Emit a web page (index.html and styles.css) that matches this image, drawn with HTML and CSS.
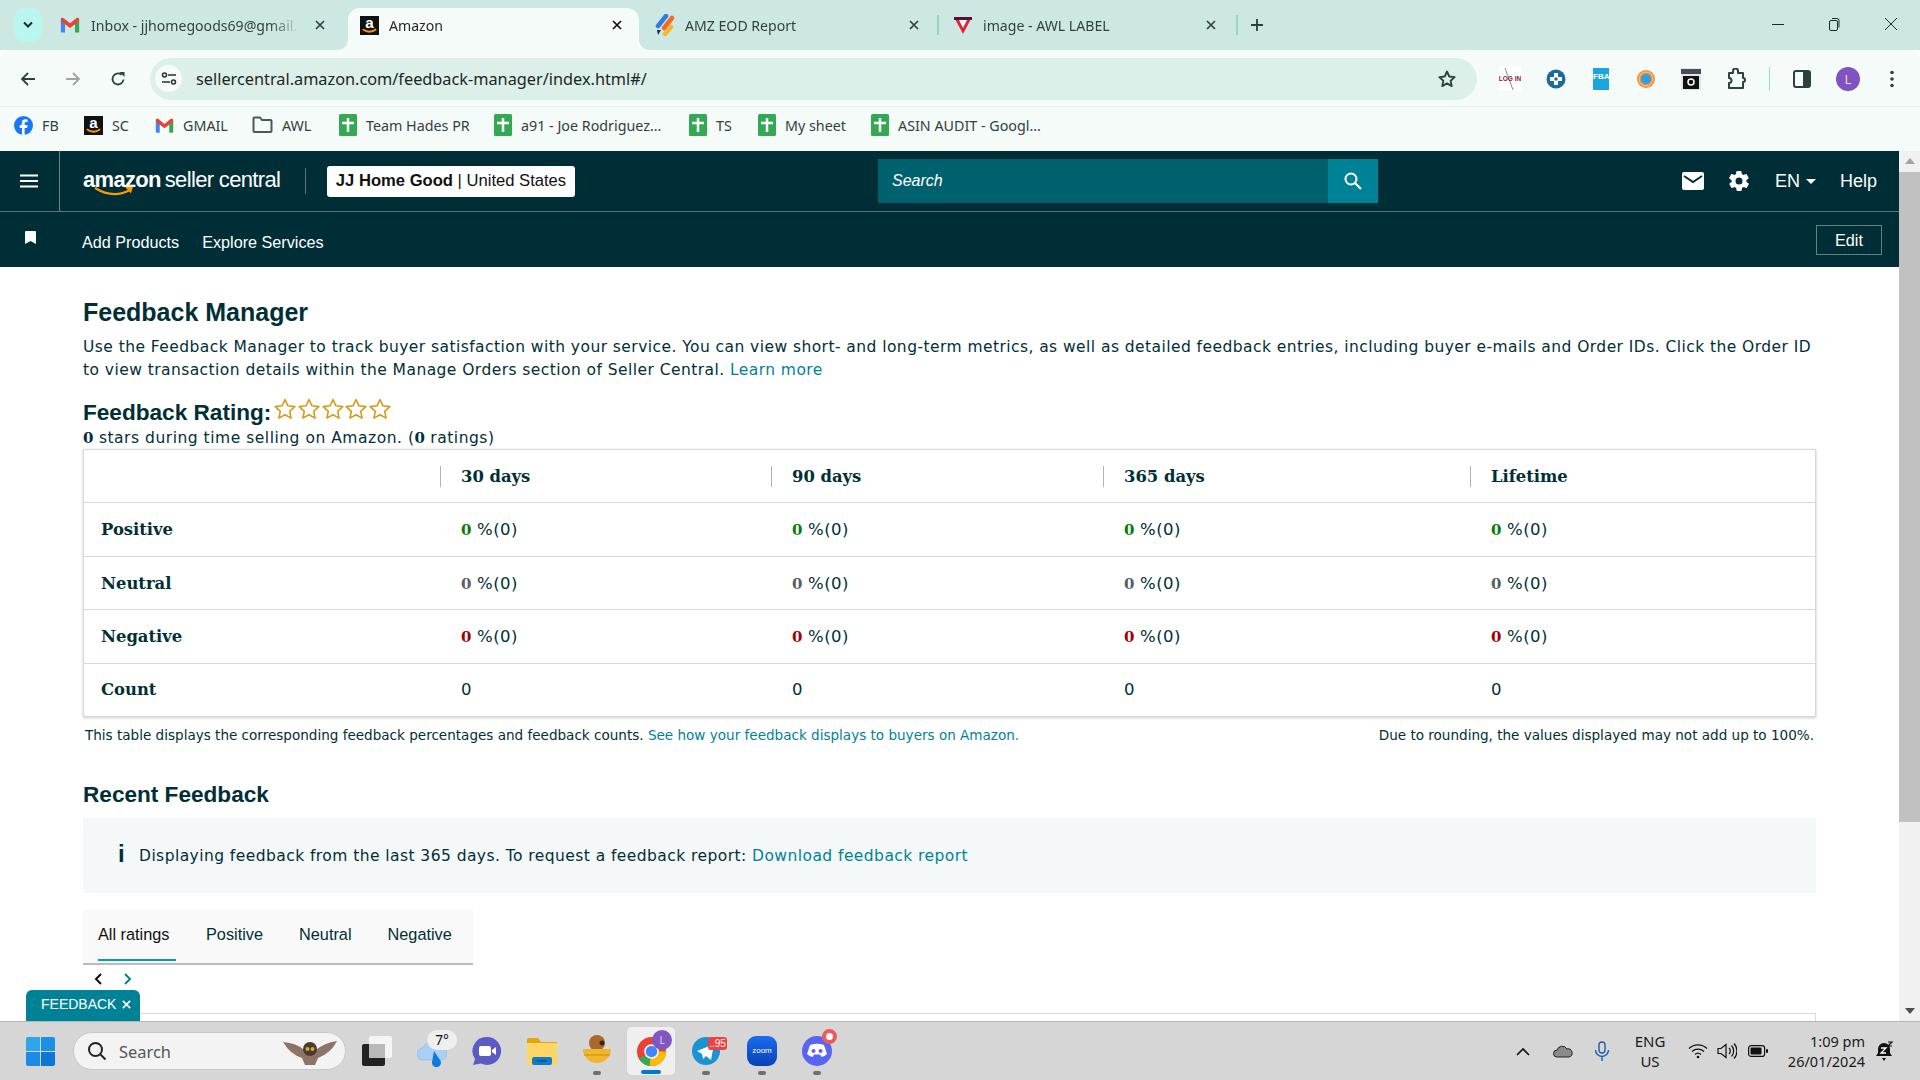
FILE: index.html
```html
<!DOCTYPE html>
<html lang="en">
<head>
<meta charset="utf-8">
<title>Amazon</title>
<link rel="stylesheet" href="styles.css">
</head>
<body>
<svg class="defs" width="0" height="0">
  <defs>
    <symbol id="gmail" viewBox="0 0 24 24"><path fill="#4285f4" d="M1 6v14a1 1 0 0 0 1 1h4V10z"/><path fill="#34a853" d="M23 6v14a1 1 0 0 1-1 1h-4V10z"/><path fill="#ea4335" d="M6 5 12 10l6-5 2-1.500a2 2 0 0 1 3 1.500v2l-5 4-6 4.500L6 11 1 7V5a2 2 0 0 1 3-1.500z"/></symbol>
    <symbol id="amz" viewBox="0 0 20 20"><rect width="20" height="20" fill="#111"/><text x="10" y="13" font-family="Liberation Sans" font-size="16" font-weight="700" fill="#fff" text-anchor="middle">a</text><path d="M3 14q7 5 14 0" fill="none" stroke="#f90" stroke-width="2"/></symbol>
    <symbol id="sheet" viewBox="0 0 18 22"><rect width="18" height="22" rx="1.500" fill="#34a853"/><path d="M9 4v14M3 9h12" stroke="#fff" stroke-width="2.500"/></symbol>
    <symbol id="x" viewBox="0 0 12 12"><path d="M2 2l8 8M10 2l-8 8" fill="none" stroke="currentColor" stroke-width="1.700"/></symbol>
    <symbol id="star" viewBox="0 0 24 24"><path d="M12 2.500l2.900 6.300 6.900.8-5.100 4.700 1.400 6.800-6.100-3.400-6.100 3.400 1.400-6.800-5.100-4.700 6.900-.8z" fill="none" stroke="#d59a1e" stroke-width="1.600" stroke-linejoin="round"/></symbol>
  </defs>
</svg>

<div class="page">
  <header class="tabstrip">
    <div class="tab-menu"><svg width="12" height="8" viewBox="0 0 12 8"><path d="M2 1.500l4 4 4-4" fill="none" stroke="#1b2b2a" stroke-width="2"/></svg></div>
    <div class="tab tab-gmail"><svg class="fav" width="20" height="20"><use href="#gmail"/></svg><span class="tab-title">Inbox - jjhomegoods69@gmail.</span><svg class="tab-x" width="12" height="12"><use href="#x"/></svg></div>
    <div class="tab tab-active"><svg class="fav" width="19" height="19"><use href="#amz"/></svg><span class="tab-title">Amazon</span><svg class="tab-x" width="12" height="12"><use href="#x"/></svg></div>
    <div class="tab tab-eod"><svg class="fav" width="20" height="22" viewBox="0 0 20 22"><path d="M3 12 11 2" stroke="#2f7de1" stroke-width="4.500" stroke-linecap="round"/><path d="M9 14 17 4" stroke="#f26b21" stroke-width="4.500" stroke-linecap="round"/><path d="M10 20l6-7" stroke="#f5b82e" stroke-width="4.500" stroke-linecap="round"/><path d="M2 16h4l-3 5z" fill="#1d2a55"/></svg><span class="tab-title">AMZ EOD Report</span><svg class="tab-x" width="12" height="12"><use href="#x"/></svg></div>
    <i class="tab-sep"></i>
    <div class="tab tab-awl"><svg class="fav" width="20" height="20" viewBox="0 0 20 20"><path d="M1 2h18l-9 17z" fill="#e0232e"/><path d="M6 5h8l-4 8z" fill="#fff"/><path d="M1 2h18v3H1z" fill="#5a1036"/></svg><span class="tab-title">image - AWL LABEL</span><svg class="tab-x" width="12" height="12"><use href="#x"/></svg></div>
    <i class="tab-sep"></i>
    <svg class="tab-plus" width="14" height="14" viewBox="0 0 14 14"><path d="M7 1v12M1 7h12" stroke="#29413d" stroke-width="1.800"/></svg>
    <div class="win-controls">
      <svg width="12" height="12" viewBox="0 0 12 12"><path d="M0 6.500h12" stroke="#1b2b2a"/></svg>
      <svg width="14" height="14" viewBox="0 0 14 14"><rect x="2.500" y="3.500" width="8" height="10" rx="1.500" fill="none" stroke="#1b2b2a"/><path d="M5 1.500h5a2 2 0 0 1 2 2v7" fill="none" stroke="#1b2b2a"/></svg>
      <svg width="14" height="14" viewBox="0 0 14 14"><path d="M1 1l12 12M13 1L1 13" stroke="#1b2b2a"/></svg>
    </div>
  </header>

  <div class="toolbar">
    <svg class="nav-ico" width="16" height="16" viewBox="0 0 16 16"><path d="M15 8H2M8 2 2 8l6 6" fill="none" stroke="#2e403e" stroke-width="1.800"/></svg>
    <svg class="nav-ico dim" width="16" height="16" viewBox="0 0 16 16"><path d="M1 8h13M8 2l6 6-6 6" fill="none" stroke="#9aa5a3" stroke-width="1.800"/></svg>
    <svg class="nav-ico" width="16" height="16" viewBox="0 0 16 16"><path d="M13.500 8.500A5.500 5.500 0 1 1 11.500 3.700" fill="none" stroke="#2e403e" stroke-width="1.800"/><path d="M9.500 1h5v5z" fill="#2e403e"/></svg>
    <div class="omnibox">
      <span class="site-info"><svg width="16" height="14" viewBox="0 0 16 14"><circle cx="3.500" cy="3" r="2" fill="none" stroke="#26302f" stroke-width="1.500"/><path d="M7 3h8M1 10h8" stroke="#26302f" stroke-width="1.500"/><circle cx="12.500" cy="10" r="2" fill="none" stroke="#26302f" stroke-width="1.500"/></svg></span>
      <span class="url">sellercentral.amazon.com/feedback-manager/index.html#/</span>
      <svg class="omni-star" width="20" height="20" viewBox="0 0 24 24"><path d="M12 3l2.700 6 6.500.7-4.800 4.400 1.300 6.400-5.700-3.200-5.700 3.200 1.300-6.400L2.800 9.700 9.300 9z" fill="none" stroke="#2e403e" stroke-width="2.200" stroke-linejoin="round"/></svg>
    </div>
    <div class="ext-row">
      <svg width="22" height="24" viewBox="0 0 22 24"><rect width="22" height="24" fill="#fff"/><path d="M6 1l8 22" stroke="#888"/><text x="11" y="14" font-size="6.500" font-weight="700" font-family="Liberation Sans" fill="#8a2030" text-anchor="middle">LOG IN</text></svg>
      <svg width="20" height="20" viewBox="0 0 20 20"><circle cx="10" cy="10" r="9.500" fill="#1b6aa0"/><path d="M10 4v12M4 10h12" stroke="#fff" stroke-width="4"/><circle cx="10" cy="10" r="1.700" fill="#1b6aa0"/></svg>
      <span class="ext-fba">FBA</span>
      <svg class="ext-orange" width="20" height="22" viewBox="0 0 20 22"><circle cx="10" cy="11" r="9" fill="#ef8f35"/><circle cx="10" cy="11" r="5" fill="#2aa0e8"/><circle cx="10" cy="11" r="7" fill="none" stroke="#f8c9a0"/></svg>
      <svg width="20" height="22" viewBox="0 0 20 22"><rect width="20" height="22" fill="#dfe6e5"/><rect y="1" width="20" height="5" fill="#4a4a55"/><rect x="2" y="8" width="16" height="13" fill="#111"/><circle cx="10" cy="14" r="3" fill="none" stroke="#fff" stroke-width="1.500"/></svg>
      <svg width="20" height="22" viewBox="0 0 20 22"><path d="M3 5h4V3a2 2 0 0 1 5 0v2h5v5a2 2 0 0 1 0 4v6H3v-5a2.500 2.500 0 0 0 0-5z" fill="none" stroke="#2e403e" stroke-width="2" stroke-linejoin="round"/></svg>
      <i class="ext-sep"></i>
      <svg width="18" height="18" viewBox="0 0 18 18"><rect x="1" y="1" width="16" height="16" rx="2" fill="none" stroke="#2e403e" stroke-width="2"/><rect x="10" y="1" width="7" height="16" fill="#2e403e"/></svg>
      <span class="avatar">L</span>
      <svg width="4" height="18" viewBox="0 0 4 18"><circle cx="2" cy="2.500" r="1.800" fill="#2e403e"/><circle cx="2" cy="9" r="1.800" fill="#2e403e"/><circle cx="2" cy="15.500" r="1.800" fill="#2e403e"/></svg>
    </div>
  </div>

  <nav class="bookmarks">
    <a class="bm bm-fb"><svg width="19" height="19" viewBox="0 0 20 20"><circle cx="10" cy="10" r="10" fill="#1877f2"/><path d="M11.200 20v-7.500h2.600l.4-3h-3V7.800c0-.9.300-1.500 1.600-1.500h1.500V3.600a18 18 0 0 0-2.300-.1c-2.300 0-3.800 1.400-3.800 3.900v2.100H6v3h2.400V20z" fill="#fff"/></svg>FB</a>
    <a class="bm bm-sc"><svg width="19" height="19"><use href="#amz"/></svg>SC</a>
    <a class="bm bm-gm"><svg width="19" height="19"><use href="#gmail"/></svg>GMAIL</a>
    <a class="bm bm-awl"><svg width="21" height="18" viewBox="0 0 21 18"><path d="M1.500 2.500a1 1 0 0 1 1-1h5.500l2 2.500h8.500a1 1 0 0 1 1 1v10a1 1 0 0 1-1 1h-16a1 1 0 0 1-1-1z" fill="none" stroke="#4d5957" stroke-width="2"/></svg>AWL</a>
    <a class="bm bm-th"><svg width="18" height="22"><use href="#sheet"/></svg>Team Hades PR</a>
    <a class="bm bm-a91"><svg width="18" height="22"><use href="#sheet"/></svg>a91 - Joe Rodriguez...</a>
    <a class="bm bm-ts"><svg width="18" height="22"><use href="#sheet"/></svg>TS</a>
    <a class="bm bm-my"><svg width="18" height="22"><use href="#sheet"/></svg>My sheet</a>
    <a class="bm"><svg width="18" height="22"><use href="#sheet"/></svg>ASIN AUDIT - Googl...</a>
  </nav>

  <div class="viewport">
    <div class="site">
      <div class="sc-head">
        <div class="burger-cell"><svg width="18" height="14" viewBox="0 0 18 14"><path d="M0 1.500h18M0 7h18M0 12.500h18" stroke="#fff" stroke-width="2"/></svg></div>
        <div class="logo"><b class="logo-amz">amazon</b><span class="logo-sc">seller central</span><svg class="swoosh" width="42" height="11" viewBox="0 0 42 11"><path d="M1 2q18 11 35 2" fill="none" stroke="#f90" stroke-width="2.200"/><path d="M31 1l8-.5-2 7z" fill="#f90"/></svg></div>
        <i class="head-div"></i>
        <div class="account"><b>JJ Home Good</b> | United States</div>
        <div class="search"><span class="search-input">Search</span><span class="search-btn"><svg width="20" height="20" viewBox="0 0 20 20"><circle cx="8" cy="8" r="5.500" fill="none" stroke="#fff" stroke-width="2"/><path d="M12 12l6 6" stroke="#fff" stroke-width="2.200"/></svg></span></div>
        <div class="head-right">
          <svg class="i-mail" width="22" height="18" viewBox="0 0 22 18"><rect width="22" height="18" rx="2" fill="#fff"/><path d="M2 4l9 6 9-6" fill="none" stroke="#002e36" stroke-width="2"/></svg>
          <svg class="i-gear" width="24" height="24" viewBox="0 0 24 24"><path fill="#fff" fill-rule="evenodd" d="M19.400 13c.1-.3.100-.7.100-1s0-.7-.1-1l2.100-1.600a.5.500 0 0 0 .1-.6l-2-3.500a.5.500 0 0 0-.6-.2l-2.500 1a7 7 0 0 0-1.700-1l-.4-2.600a.5.500 0 0 0-.5-.4h-4a.5.500 0 0 0-.5.400l-.4 2.600a7 7 0 0 0-1.700 1l-2.500-1a.5.500 0 0 0-.6.2l-2 3.500a.5.500 0 0 0 .1.600L4.600 11a8 8 0 0 0 0 2l-2.100 1.600a.5.500 0 0 0-.1.600l2 3.500c.1.200.4.300.6.200l2.500-1c.5.400 1.100.7 1.700 1l.4 2.600c0 .2.200.4.500.4h4c.3 0 .5-.2.500-.4l.4-2.600a7 7 0 0 0 1.700-1l2.500 1c.2.100.5 0 .6-.2l2-3.500a.5.500 0 0 0-.1-.6zM12 15.500a3.500 3.500 0 1 1 0-7 3.500 3.500 0 0 1 0 7z"/></svg>
          <span class="lang">EN<i class="caret"></i></span>
          <span class="help">Help</span>
        </div>
      </div>
      <div class="sc-sub">
        <svg class="i-book" width="11" height="13" viewBox="0 0 11 13"><path d="M0 1a1 1 0 0 1 1-1h9a1 1 0 0 1 1 1v12l-5.500-3L0 13z" fill="#fff"/></svg>
        <a class="sub-link">Add Products</a>
        <a class="sub-link">Explore Services</a>
        <span class="edit">Edit</span>
      </div>
      <main class="content">
        <h1 class="h-main">Feedback Manager</h1>
        <p class="intro">Use the Feedback Manager to track buyer satisfaction with your service. You can view short- and long-term metrics, as well as detailed feedback entries, including buyer e-mails and Order IDs. Click the Order ID to view transaction details within the Manage Orders section of Seller Central. <a class="lnk">Learn more</a></p>
        <div class="rating-head">
          <h2 class="h-rating">Feedback Rating:</h2>
          <span class="stars"><svg width="24" height="24"><use href="#star"/></svg><svg width="24" height="24"><use href="#star"/></svg><svg width="24" height="24"><use href="#star"/></svg><svg width="24" height="24"><use href="#star"/></svg><svg width="24" height="24"><use href="#star"/></svg></span>
        </div>
        <p class="rating-sub"><b>0</b> stars during time selling on Amazon. (<b>0</b> ratings)</p>

        <div class="fb-table">
          <div class="row row-head"><span></span><b class="th">30 days</b><b class="th">90 days</b><b class="th">365 days</b><b class="th">Lifetime</b></div>
          <div class="row"><b class="rh">Positive</b><span><b class="g">0</b> %(0)</span><span><b class="g">0</b> %(0)</span><span><b class="g">0</b> %(0)</span><span><b class="g">0</b> %(0)</span></div>
          <div class="row"><b class="rh">Neutral</b><span><b class="n">0</b> %(0)</span><span><b class="n">0</b> %(0)</span><span><b class="n">0</b> %(0)</span><span><b class="n">0</b> %(0)</span></div>
          <div class="row"><b class="rh">Negative</b><span><b class="r">0</b> %(0)</span><span><b class="r">0</b> %(0)</span><span><b class="r">0</b> %(0)</span><span><b class="r">0</b> %(0)</span></div>
          <div class="row"><b class="rh">Count</b><span>0</span><span>0</span><span>0</span><span>0</span></div>
        </div>
        <div class="note"><span>This table displays the corresponding feedback percentages and feedback counts. <a class="lnk">See how your feedback displays to buyers on Amazon.</a></span><span>Due to rounding, the values displayed may not add up to 100%.</span></div>

        <h2 class="h-recent">Recent Feedback</h2>
        <div class="info"><b class="info-i">i</b><span>Displaying feedback from the last 365 days. To request a feedback report: <a class="lnk">Download feedback report</a></span></div>

        <div class="tabs"><a class="t t-on">All ratings</a><a class="t t-pos">Positive</a><a class="t t-neu">Neutral</a><a class="t">Negative</a></div>
        <div class="pager">
          <svg width="10" height="14" viewBox="0 0 10 14"><path d="M8 2 3 7l5 5" fill="none" stroke="#0f1111" stroke-width="2"/></svg>
          <svg width="10" height="14" viewBox="0 0 10 14"><path d="M2 2l5 5-5 5" fill="none" stroke="#008296" stroke-width="2"/></svg>
        </div>
        <div class="next-card"></div>
      </main>
    </div>
    <div class="scrollbar"><i class="sb-up"></i><i class="sb-thumb"></i><i class="sb-down"></i></div>
    <div class="feedback-tab">FEEDBACK<svg width="11" height="11"><use href="#x"/></svg></div>
  </div>

  <footer class="taskbar">
    <svg class="tk-win" width="29" height="29" viewBox="0 0 29 29"><path fill="#2ea6ee" d="M0 2a2 2 0 0 1 2-2h12v14H0z"/><path fill="#1c90e6" d="M15 0h12a2 2 0 0 1 2 2v12H15z"/><path fill="#1a8ae4" d="M0 15h14v14H2a2 2 0 0 1-2-2z"/><path fill="#0b78d8" d="M15 15h14v12a2 2 0 0 1-2 2H15z"/></svg>
    <div class="tk-search">
      <svg width="20" height="20" viewBox="0 0 20 20"><circle cx="8.500" cy="8.500" r="6.500" fill="none" stroke="#222" stroke-width="2"/><path d="M13.500 13.500 18.500 18.500" stroke="#222" stroke-width="2"/></svg>
      <span class="tk-search-text">Search</span>
      <svg class="owl" width="54" height="28" viewBox="0 0 54 28"><path d="M0 5q14 1 21 8l6 4 6-4q8-7 21-9-6 12-19 17l-3 7h-10l-3-7Q7 17 0 5z" fill="#8d7466"/><circle cx="27" cy="12" r="7" fill="#4a3a30"/><circle cx="24.500" cy="12" r="2" fill="#d8a93a"/><circle cx="29.500" cy="12" r="2" fill="#d8a93a"/></svg>
    </div>
    <svg class="tk-view" width="30" height="30" viewBox="0 0 30 30"><rect y="8" width="23" height="22" rx="2" fill="#222"/><rect x="7" width="23" height="22" rx="2" fill="#f4f4f4"/><rect x="7" y="8" width="16" height="14" fill="#b9b9b9"/></svg>
    <div class="tk-weather"><svg width="30" height="26" viewBox="0 0 30 26"><path d="M6 19a6 6 0 0 1 0-12 9 9 0 0 1 16-2 7 7 0 0 1 2 14z" fill="#a9d1f7" stroke="#7fb5ea" stroke-width=".6"/><path d="M17 10l6 9a4.500 4.500 0 1 1-8 2z" fill="#0c7ce0"/></svg><span class="tk-temp">7°</span></div>
    <svg class="tk-meet" width="30" height="30" viewBox="0 0 30 30"><path d="M15 1a14 14 0 1 1-6 26.600L1 29l2-6A14 14 0 0 1 15 1z" fill="#5b5bc4"/><rect x="7" y="10" width="12" height="10" rx="2" fill="#fff"/><path d="M20 14l4-3v8l-4-3z" fill="#fff"/></svg>
    <svg class="tk-folder" width="30" height="27" viewBox="0 0 30 27"><path d="M0 2a2 2 0 0 1 2-2h9l3 4h16v5H0z" fill="#e2a50f"/><rect y="5" width="30" height="22" fill="#fcd765"/><rect x="5" y="19" width="20" height="8" rx="2" fill="#0f7bcc"/><path d="M10 23h10" stroke="#0a4f8a" stroke-width="1.500"/></svg>
    <div class="tk-app tk-bear"><svg width="28" height="32" viewBox="0 0 28 32"><circle cx="14" cy="8" r="8" fill="#a86a2c"/><circle cx="19" cy="8" r="2.500" fill="#3a2410"/><path d="M0 14h28a14 14 0 0 1-28 0z" fill="#f0b62c"/><path d="M1 20h26" stroke="#c98a15"/></svg><i class="pip"></i></div>
    <div class="tk-app tk-chrome"><svg width="31" height="31" viewBox="0 0 32 32"><circle cx="16" cy="16" r="15" fill="#ea4335"/><path d="M16 16 3 23.500A15 15 0 0 0 16 31z" fill="#34a853"/><path d="M16 16h15a15 15 0 0 1-15 15l-2-1z" fill="#fbbc04"/><circle cx="16" cy="16" r="7.500" fill="#fff"/><circle cx="16" cy="16" r="6" fill="#4285f4"/></svg><span class="ch-badge">L</span><i class="pip pip-on"></i></div>
    <div class="tk-app tk-tg"><svg width="28" height="28" viewBox="0 0 28 28"><circle cx="14" cy="14" r="14" fill="#1b92d1"/><path d="M5 14l17-7-3 16-5-4-3 3-1-5z" fill="#fff"/></svg><span class="tg-badge">..95</span><i class="pip"></i></div>
    <div class="tk-app tk-zoom"><span class="zoom-ico">zoom</span><i class="pip"></i></div>
    <div class="tk-app tk-discord"><svg width="30" height="30" viewBox="0 0 30 30"><circle cx="15" cy="15" r="15" fill="#5865f2"/><path d="M8 9q7-2.500 14 0l3 9q-2.500 2.500-5.500 3l-1.500-2.500h-6L10.500 21Q7.500 20.500 5 18z" fill="#fff"/><circle cx="11.500" cy="15" r="2" fill="#5865f2"/><circle cx="18.500" cy="15" r="2" fill="#5865f2"/></svg><span class="dc-badge"></span><i class="pip"></i></div>
    <div class="tray">
      <svg class="tr-caret" width="14" height="9" viewBox="0 0 14 9"><path d="M1 8l6-6 6 6" fill="none" stroke="#111" stroke-width="1.600"/></svg>
      <svg class="tr-cloud" width="20" height="14" viewBox="0 0 20 14"><path d="M4 13a3.500 3.500 0 0 1 0-7 5.500 5.500 0 0 1 10-1 4 4 0 0 1 2 8z" fill="#8a8a8a" stroke="#222"/></svg>
      <svg class="tr-mic" width="16" height="20" viewBox="0 0 16 20"><rect x="5" y="1" width="6" height="11" rx="3" fill="none" stroke="#1e5fb3" stroke-width="1.400"/><path d="M1.500 9a6.500 6.500 0 0 0 13 0M8 15.500V20" fill="none" stroke="#1e5fb3" stroke-width="1.400"/></svg>
      <span class="tr-lang">ENG<br>US</span>
      <svg class="tr-wifi" width="20" height="16" viewBox="0 0 20 16"><path d="M1 5.500a13 13 0 0 1 18 0M4 8.500a9 9 0 0 1 12 0M7 11.500a4.500 4.500 0 0 1 6 0" fill="none" stroke="#111" stroke-width="1.300"/><circle cx="10" cy="14" r="1.300" fill="#111"/></svg>
      <svg class="tr-vol" width="20" height="18" viewBox="0 0 20 18"><path d="M1 6.500h3L9 2.500v13l-5-4H1z" fill="none" stroke="#111" stroke-width="1.200"/><path d="M12 6a4 4 0 0 1 0 6M14.500 3.500a8 8 0 0 1 0 11M17 1.500a11 11 0 0 1 0 15" fill="none" stroke="#111" stroke-width="1.200"/></svg>
      <svg class="tr-bat" width="20" height="12" viewBox="0 0 20 12"><rect x=".6" y=".6" width="16" height="10.800" rx="2.500" fill="none" stroke="#111" stroke-width="1.200"/><rect x="2.500" y="2.500" width="11" height="7" rx="1" fill="#111"/><rect x="18" y="4" width="2" height="4" rx="1" fill="#111"/></svg>
      <span class="tr-time">1:09 pm<br>26/01/2024</span>
      <svg class="tr-bell" width="18" height="20" viewBox="0 0 18 20"><path d="M8 2a6 6 0 0 0-6 6v4l-2 3h16l-2-3V8a6 6 0 0 0-6-6z" fill="#111"/><path d="M6 17h4l-2 3z" fill="#111"/><path d="M12 1h4l-4 4h4" fill="none" stroke="#111" stroke-width="1.200"/><path d="M5 7h5L5 12h5" fill="none" stroke="#fff" stroke-width="1.300"/></svg>
    </div>
  </footer>
</div>
</body>
</html>
```

FILE: styles.css
```css
* { box-sizing: border-box; }
html, body { margin: 0; height: 100%; overflow: hidden; }
body { font-family: "Liberation Sans", Arial, sans-serif; color: #002f36; background: #fff; }
a { text-decoration: none; }
.defs { position: absolute; }
.page { width: 1920px; height: 1080px; display: flex; flex-direction: column; }

/* tab strip */
.tabstrip { height: 50px; flex: none; background: #cde8e2; display: flex; align-items: flex-end; position: relative; font: 15px "Noto Sans", "Open Sans", sans-serif; color: #33403e; }
.tab-menu { width: 28px; height: 34px; margin: 0 0 8px 14px; background: #b8f6ee; border-radius: 12px; display: flex; align-items: center; justify-content: center; flex: none; }
.tab { height: 42px; display: flex; align-items: center; flex: none; position: relative; padding-bottom: 8px; }
.tab-title { white-space: nowrap; overflow: hidden; flex: 1; transform: scaleX(.94); transform-origin: left center; }
.tab-x { color: #33403e; flex: none; }
.fav { flex: none; margin-right: 10px; }
.tab-gmail { width: 288px; margin-left: 18px; padding-right: 22px; }
.tab-gmail .fav { margin-right: 11px; }
.tab-gmail .tab-title { -webkit-mask-image: linear-gradient(90deg, #000 85%, transparent 100%); mask-image: linear-gradient(90deg, #000 85%, transparent 100%); }
.tab-active { width: 291px; padding: 0 16px 8px 12px; background: #f5fbf8; border-radius: 12px 12px 0 0; color: #1c2725; }
.tab-active::before, .tab-active::after { content: ""; position: absolute; bottom: 0; width: 10px; height: 10px; }
.tab-active::before { left: -10px; background: radial-gradient(circle at 0 0, #cde8e2 9.500px, #f5fbf8 10px); }
.tab-active::after { right: -10px; background: radial-gradient(circle at 100% 0, #cde8e2 9.500px, #f5fbf8 10px); }
.tab-active .tab-x { color: #111; }
.tab-eod { width: 298px; padding: 0 17px 8px 16px; }
.tab-sep { width: 2px; height: 20px; background: #92d6c8; margin-bottom: 15px; flex: none; }
.tab-awl { width: 297px; padding: 0 19px 8px 14px; }
.tab-plus { margin: 0 0 18px 12px; flex: none; }
.win-controls { position: absolute; top: 17px; right: 22px; display: flex; gap: 43px; align-items: center; }
.win-controls svg { display: block; }

/* toolbar */
.toolbar { height: 57px; flex: none; background: #f5fbf8; display: flex; align-items: center; padding-top: 1px; border-bottom: 1px solid #e8f2ee; border-radius: 10px 10px 0 0; }
.nav-ico { flex: none; margin-left: 29px; }
.nav-ico:first-child { margin-left: 20px; }
.omnibox { width: 1327px; height: 42px; margin-left: 24px; background: #dcefe9; border-radius: 21px; display: flex; align-items: center; padding: 0 20px 0 5px; flex: none; }
.site-info { width: 27px; height: 27px; border-radius: 50%; background: #f5fbf8; display: flex; align-items: center; justify-content: center; flex: none; }
.url { margin-left: 14px; flex: 1; font: 16.3px "Noto Sans", sans-serif; color: #1b2725; }
.ext-row { display: flex; align-items: center; margin-left: 22px; }
.ext-row > * { flex: none; margin-right: 25px; }
.ext-row > svg:nth-child(2) { margin-right: 27px; }
.ext-fba { width: 16px; height: 22px; background: #1ba5e0; color: #fff; font: 700 8px "Liberation Sans", sans-serif; text-align: center; line-height: 18px; overflow: hidden; margin-right: 27px; }
.ext-sep { width: 1px; height: 24px; background: #8fe3d8; margin-right: 23px; margin-left: -2px; }
.avatar { width: 24px; height: 24px; border-radius: 50%; background: #8053c0; color: #e6dcf6; font: 13px "Noto Sans", sans-serif; text-align: center; line-height: 24px; margin-right: 30px; }

/* bookmarks */
.bookmarks { height: 44px; flex: none; background: #f5fbf8; display: flex; align-items: center; padding: 0 0 8px 14px; font: 14.3px "Noto Sans", sans-serif; color: #33403e; }
.bm { display: flex; align-items: center; gap: 9px; flex: none; white-space: nowrap; }
.bm-fb { width: 70px; }
.bm-sc { width: 71px; }
.bm-gm { width: 97px; }
.bm-awl { width: 87px; }
.bm-th { width: 155px; }
.bm-a91 { width: 195px; }
.bm-ts { width: 69px; }
.bm-my { width: 113px; }

/* viewport */
.viewport { flex: 1; min-height: 0; display: flex; position: relative; overflow: hidden; }
.site { flex: 1; min-width: 0; overflow: hidden; }
.scrollbar { width: 21px; flex: none; background: #f1f1f1; display: flex; flex-direction: column; align-items: center; }
.sb-up, .sb-down { width: 0; height: 0; border-left: 5px solid transparent; border-right: 5px solid transparent; flex: none; }
.sb-up { border-bottom: 6px solid #a3a3a3; margin: 7px 0 8px; }
.sb-thumb { width: 100%; height: 650px; background: #c1c1c1; flex: none; }
.sb-down { border-top: 6px solid #505050; margin-top: auto; margin-bottom: 7px; }

/* header */
.sc-head { height: 61px; background: #002e36; border-bottom: 1px solid #5b7378; display: flex; align-items: center; color: #fff; }
.burger-cell { width: 60px; height: 60px; border-right: 1px solid #6d8185; display: flex; align-items: center; justify-content: center; padding-right: 1px; flex: none; }
.logo { margin-left: 23px; width: 199px; height: 30px; position: relative; display: flex; align-items: baseline; flex: none; white-space: nowrap; }
.logo-amz { font: 700 22px/28px "Liberation Sans", sans-serif; letter-spacing: -.7px; }
.logo-sc { font: 22px/28px "Liberation Sans", sans-serif; margin-left: 4px; letter-spacing: -.65px; }
.swoosh { position: absolute; left: 11px; top: 20px; }
.head-div { width: 1px; height: 26px; background: #5b7378; margin-left: 23px; flex: none; }
.account { margin-left: 21px; width: 248px; height: 31px; background: #fff; border-radius: 3px; color: #0f1111; font-size: 16.6px; line-height: 30px; text-align: center; white-space: nowrap; flex: none; }
.search { margin-left: 303px; width: 500px; height: 44px; display: flex; flex: none; }
.search-input { flex: 1; background: #00616e; font-style: italic; font-size: 16px; line-height: 44px; padding-left: 14px; }
.search-btn { width: 50px; background: #008296; display: flex; align-items: center; justify-content: center; }
.head-right { display: flex; align-items: center; margin-left: auto; padding-right: 22px; font-size: 18px; }
.i-mail { margin-right: 23px; }
.i-gear { margin-right: 24px; }
.lang { display: flex; align-items: center; margin-right: 24px; }
.caret { width: 0; height: 0; border-left: 5px solid transparent; border-right: 5px solid transparent; border-top: 5px solid #fff; margin-left: 6px; }
.sc-sub { height: 55px; background: #002e36; display: flex; align-items: center; color: #fff; font-size: 16.2px; padding-right: 17px; }
.i-book { margin: -4px 46px 0 25px; flex: none; }
.sub-link { margin: 5px 23px 0 0; }
.edit { margin-left: auto; width: 66px; height: 30px; border: 1px solid #66807f; line-height: 28px; text-align: center; }

/* content */
.content { padding: 0 83px 0 83px; font-family: "DejaVu Sans", sans-serif; font-size: 15.5px; color: #002f36; }
.h-main { margin: 30px 0 0; font: 700 25px/30px "Liberation Sans", sans-serif; color: #002f36; }
.intro { margin: 9px 0 0; line-height: 23px; letter-spacing: .44px; }
.lnk { color: #008296; }
.rating-head { display: flex; align-items: flex-start; margin-top: 15px; height: 27px; }
.h-rating { margin: 3px 0 0; font: 700 22.6px/26px "Liberation Sans", sans-serif; color: #002f36; }
.stars { display: flex; margin-left: 2px; margin-top: 0; width: 120px; }
.stars svg { flex: none; margin-right: -.4px; }
.rating-sub { margin: 4px 0 0; line-height: 20px; letter-spacing: .52px; }
.rating-sub b, .g, .n, .r { font-family: "DejaVu Serif", serif; font-weight: 700; letter-spacing: 0; font-size: 15px; }
.fb-table { margin-top: 1px; height: 268px; border: 1px solid #d5dbdb; box-shadow: 0 1px 3px rgba(0,0,0,.2); display: flex; flex-direction: column; font-size: 16.5px; letter-spacing: .4px; }
.row { flex: 1; display: grid; grid-template-columns: 360px 331px 332px 367px 1fr; align-items: center; border-bottom: 1px solid #d5dbdb; padding-left: 17px; }
.row:last-child { border-bottom: 0; }
.row-head .th:nth-child(n) { height: 21px; line-height: 21px; border-left: 0; position: relative; }
.th::before { content: ""; position: absolute; left: -21px; top: 0; width: 1px; height: 21px; background: #aab7b8; }
.th, .rh { font-family: "DejaVu Serif", serif; font-weight: 700; color: #002f36; letter-spacing: 0; font-size: 16.4px; }
.g { color: #067d06; }
.n { color: #565f61; }
.r { color: #a40000; }
.note { display: flex; justify-content: space-between; padding: 7px 2px 0; font: 13.55px/22px "DejaVu Sans", sans-serif; white-space: nowrap; }
.h-recent { margin: 35px 0 0; font: 700 22.6px/28px "Liberation Sans", sans-serif; color: #002f36; }
.info { margin-top: 9px; height: 75px; background: #f5f8f8; display: flex; align-items: center; padding-left: 35px; letter-spacing: .44px; }
.info-i { width: 21px; font: 700 24px/22px "Liberation Sans", sans-serif; flex: none; margin-top: -3px; color: #002f36; }
.tabs { margin-top: 16px; width: 390px; height: 56px; background: #f9f9f9; border-bottom: 2px solid #bbb; display: flex; padding-left: 15px; font: 16.3px/50px "Liberation Sans", sans-serif; color: #002f36; }
.t { height: 52px; }
.t-on { width: 78px; margin-right: 30px; color: #0f1111; box-shadow: inset 0 -2px 0 #00a0ad; }
.t-pos { margin-right: 36px; }
.t-neu { margin-right: 36px; }
.pager { height: 28px; display: flex; align-items: center; gap: 20px; padding-left: 10px; }
.next-card { margin-top: 20px; height: 40px; border: 1px solid #d5dbdb; }
.feedback-tab { position: absolute; left: 26px; bottom: 0; width: 114px; height: 31px; background: #008296; border-radius: 6px 6px 0 0; color: #fff; font-size: 14px; line-height: 29px; display: flex; align-items: center; gap: 5px; padding: 0 0 2px 15px; }

/* taskbar */
.taskbar { height: 59px; flex: none; background: #d6d6d6; border-top: 1px solid #b5b5b5; display: flex; align-items: center; padding-left: 26px; }
.taskbar > * { flex: none; }
.tk-search { width: 273px; height: 38px; margin-left: 18px; background: #f3f3f3; border: 1px solid #c9c9c9; border-radius: 19px; display: flex; align-items: center; padding-left: 13px; position: relative; }
.tk-search-text { margin-left: 12px; font: 16.4px "Noto Sans", sans-serif; color: #555; }
.owl { margin-left: auto; margin-right: 8px; }
.tk-view { margin-left: 16px; }
.tk-weather { width: 40px; height: 38px; margin-left: 25px; position: relative; display: flex; align-items: flex-end; padding-bottom: 3px; }
.tk-temp { position: absolute; left: 10px; top: -2px; width: 30px; height: 20px; border-radius: 10px; background: #eee; color: #111; font: 13.5px/20px "Noto Sans", sans-serif; text-align: center; }
.tk-meet { margin-left: 15px; }
.tk-folder { margin-left: 25px; }
.tk-app { position: relative; height: 48px; display: flex; align-items: center; justify-content: center; }
.pip { position: absolute; bottom: 0; left: 50%; margin-left: -4px; width: 8px; height: 4px; border-radius: 2px; background: #6f6f6f; }
.pip-on { width: 20px; margin-left: -10px; background: #0078d4; bottom: 1px; }
.tk-bear { width: 28px; margin-left: 26px; }
.tk-chrome { width: 48px; margin-left: 16px; background: #efefef; border-radius: 5px; }
.ch-badge { position: absolute; right: 3px; top: 3px; width: 20px; height: 20px; border-radius: 50%; background: #7e57c2; color: #e0d6f4; font: 10px/20px "Noto Sans", sans-serif; text-align: center; }
.tk-tg { width: 28px; margin-left: 17px; }
.tg-badge { position: absolute; right: -7px; top: 10px; width: 19px; height: 13px; border-radius: 3px; background: #f04141; color: #fff; font: 10px/13px "Liberation Sans", sans-serif; text-align: center; overflow: hidden; }
.tk-zoom { width: 30px; margin-left: 27px; }
.zoom-ico { width: 30px; height: 30px; border-radius: 9px; background: linear-gradient(#1a6cf0, #0a3fb5); color: #fff; font: 8px/30px "Liberation Sans", sans-serif; text-align: center; }
.tk-discord { width: 30px; margin-left: 25px; }
.dc-badge { position: absolute; right: -5px; top: 2px; width: 15px; height: 15px; border-radius: 50%; background: #fff; border: 4px solid #ee5a5a; }
.tray { margin-left: auto; display: flex; align-items: center; padding-right: 26px; font: 14.5px/20px "Noto Sans", sans-serif; color: #1a1a1a; }
.tray > * { flex: none; }
.tr-cloud { margin-left: 23px; }
.tr-mic { margin-left: 21px; }
.tr-lang { margin-left: 20px; width: 40px; text-align: center; font-size: 15px; }
.tr-wifi { margin-left: 18px; }
.tr-vol { margin-left: 9px; }
.tr-bat { margin-left: 11px; }
.tr-time { margin-left: 17px; width: 80px; text-align: right; white-space: nowrap; }
.tr-bell { margin-left: 11px; }
```
